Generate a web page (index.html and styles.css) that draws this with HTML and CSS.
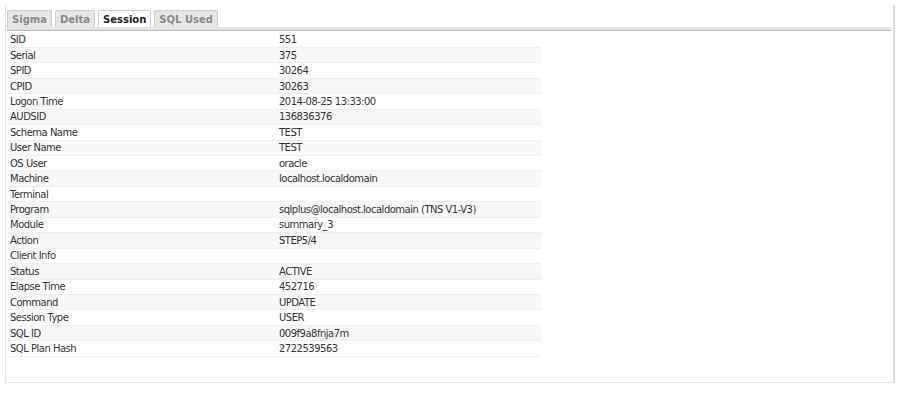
FILE: index.html
```
<!DOCTYPE html>
<html>
	<head>
		<meta charset="UTF-8">
		<title>Session</title>
		<link rel="stylesheet" href="styles.css">
	</head>
	<body>
		<div class="panel">
			<div class="tabs">
				<span class="tab">Sigma</span>
				<span class="tab">Delta</span>
				<span class="tab active">Session</span>
				<span class="tab">SQL Used</span>
			</div>
			<div class="tabbar"></div>
			<table class="grid">
				<tr><td>SID</td><td>551</td></tr>
				<tr><td>Serial</td><td>375</td></tr>
				<tr><td>SPID</td><td>30264</td></tr>
				<tr><td>CPID</td><td>30263</td></tr>
				<tr><td>Logon Time</td><td>2014-08-25 13:33:00</td></tr>
				<tr><td>AUDSID</td><td>136836376</td></tr>
				<tr><td>Schema Name</td><td>TEST</td></tr>
				<tr><td>User Name</td><td>TEST</td></tr>
				<tr><td>OS User</td><td>oracle</td></tr>
				<tr><td>Machine</td><td>localhost.localdomain</td></tr>
				<tr><td>Terminal</td><td></td></tr>
				<tr><td>Program</td><td>sqlplus@localhost.localdomain (TNS V1-V3)</td></tr>
				<tr><td>Module</td><td>summary_3</td></tr>
				<tr><td>Action</td><td>STEP5/4</td></tr>
				<tr><td>Client Info</td><td></td></tr>
				<tr><td>Status</td><td>ACTIVE</td></tr>
				<tr><td>Elapse Time</td><td>452716</td></tr>
				<tr><td>Command</td><td>UPDATE</td></tr>
				<tr><td>Session Type</td><td>USER</td></tr>
				<tr><td>SQL ID</td><td>009f9a8fnja7m</td></tr>
				<tr><td>SQL Plan Hash</td><td>2722539563</td></tr>
			</table>
		</div>
	</body>
</html>
```
FILE: styles.css
```
body{
	margin: 0;
	padding: 5px 0 0 5px;
	background: #fff;
	font-family: "DejaVu Sans", Tahoma, sans-serif;
	font-size: 10px;
	letter-spacing: -0.5px;
	color: #333;
}
.panel{
	width: 889px;
	height: 378px;
	border: 1px solid #e2e2e2;
	border-top: none;
	box-shadow: 1px 1px 0 #d0d0d0;
	padding: 5px 0 0 1px;
	box-sizing: border-box;
}
.tabs{
	display: flex;
	gap: 3px;
	height: 17px;
}
.tab{
	display: block;
	height: 17px;
	line-height: 17px;
	padding: 0 4px;
	background: #e6e6e6;
	border: 1px solid #cfcfcf;
	border-bottom: none;
	border-radius: 2px 2px 0 0;
	box-sizing: border-box;
	font-weight: bold;
	font-size: 10px;
	letter-spacing: 0;
	color: #8a8a8a;
}
.tab.active{
	background: #fff;
	color: #222;
}
.tabbar{
	height: 3px;
	margin-right: 2px;
	background: #e3e3e3;
	border-bottom: 1px solid #b9b9b9;
}
.grid{
	border-collapse: collapse;
	width: 533px;
	margin: 1px 0 0 1px;
}
.grid td{
	height: 15.45px;
	padding: 0 0 0 2px;
	border-bottom: 1px solid #efefef;
	white-space: nowrap;
	box-sizing: border-box;
}
.grid td:first-child{
	width: 269px;
}
.grid tr:nth-child(even) td{
	background: #f8f8f8;
}
```
